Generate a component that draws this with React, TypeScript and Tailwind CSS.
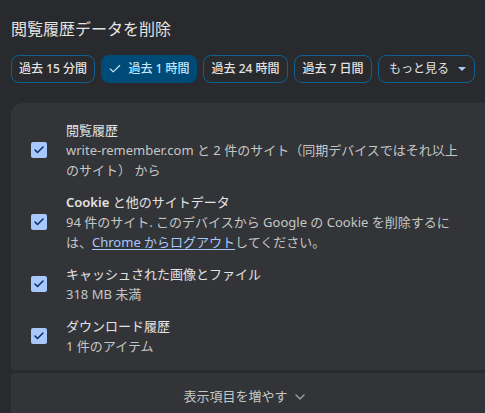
import { Check, ChevronDown } from "lucide-react";

const ranges = [
  { label: "過去 15 分間", width: "w-[84px]" },
  { label: "過去 1 時間", width: "w-[96px]", selected: true },
  { label: "過去 24 時間", width: "w-[85px]" },
  { label: "過去 7 日間", width: "w-[78px]" },
];

function Box() {
  return (
    <div className="flex h-4 w-4 shrink-0 items-center justify-center rounded-[2px] bg-[#a8c7fa]">
      <Check className="h-3 w-3 text-[#062e6f]" strokeWidth={3} />
    </div>
  );
}

function Item({ title, children }: { title: React.ReactNode; children: React.ReactNode }) {
  return (
    <div className="flex items-center">
      <div className="flex w-[55px] shrink-0 justify-start pl-5">
        <Box />
      </div>
      <div className="w-[395px]">
        <p className="text-[13px] leading-5 text-[#e3e3e3]">{title}</p>
        <p className="text-[13px] leading-5 text-[#c4c7c5]">{children}</p>
      </div>
    </div>
  );
}

export default function App() {
  return (
    <div
      className="h-[413px] w-[485px] overflow-hidden bg-[#292a2d] pl-[11px] pt-[17px]"
      style={{ fontFamily: '"Noto Sans", "Noto Sans CJK JP", sans-serif' }}
    >
      <h1 className="text-base leading-6 text-[#e3e3e3]">閲覧履歴データを削除</h1>

      <div className="mt-[14px] flex gap-[6px] whitespace-nowrap">
        {ranges.map((r) =>
          r.selected ? (
            <button
              key={r.label}
              className={`flex h-7 shrink-0 items-center justify-center gap-[6px] rounded-lg bg-[#004a77] text-xs font-medium text-[#c2e7ff] ${r.width}`}
            >
              <Check className="h-[14px] w-[14px]" strokeWidth={2} />
              {r.label}
            </button>
          ) : (
            <button
              key={r.label}
              className={`flex h-7 shrink-0 items-center justify-center rounded-lg border border-[#0e5f92] text-xs font-medium text-[#e3e3e3] ${r.width}`}
            >
              {r.label}
            </button>
          ),
        )}
        <button className="flex h-7 w-[97px] shrink-0 items-center justify-center gap-[9px] rounded-lg border border-[#0e5f92] pl-[2px] text-xs text-[#e3e3e3]">
          もっと見る
          <svg width="8" height="4" viewBox="0 0 8 4">
            <path d="M0 0h8L4 4z" fill="#a8c7fa" />
          </svg>
        </button>
      </div>

      <div className="mr-[-20px] mt-5 flex flex-col gap-3 rounded-t-xl rounded-b-[4px] bg-[#333438] pt-[17px] pb-[14px]">
        <Item title="閲覧履歴">
          write-remember.com と 2 件のサイト（同期デバイスではそれ以上のサイト） から
        </Item>
        <Item
          title={
            <>
              <span className="font-semibold">Cookie</span> と他のサイトデータ
            </>
          }
        >
          <span>94 件のサイト. このデバイスから Google の Cookie を削除するに</span>
          <br />
          <span>は、</span>
          <span className="text-[#a8c7fa] underline underline-offset-2">Chrome からログアウト</span>
          <span>してください。</span>
        </Item>
        <Item title="キャッシュされた画像とファイル">318 MB 未満</Item>
        <Item title="ダウンロード履歴">1 件のアイテム</Item>
      </div>

      <div className="mr-[-20px] mt-[3px] flex h-12 items-center justify-center gap-1 rounded-[4px] bg-[#333438] pr-[25px] text-[13px] text-[#c4c7c5]">
        表示項目を増やす
        <ChevronDown className="h-4 w-4 text-[#9aa0a6]" />
      </div>
    </div>
  );
}
